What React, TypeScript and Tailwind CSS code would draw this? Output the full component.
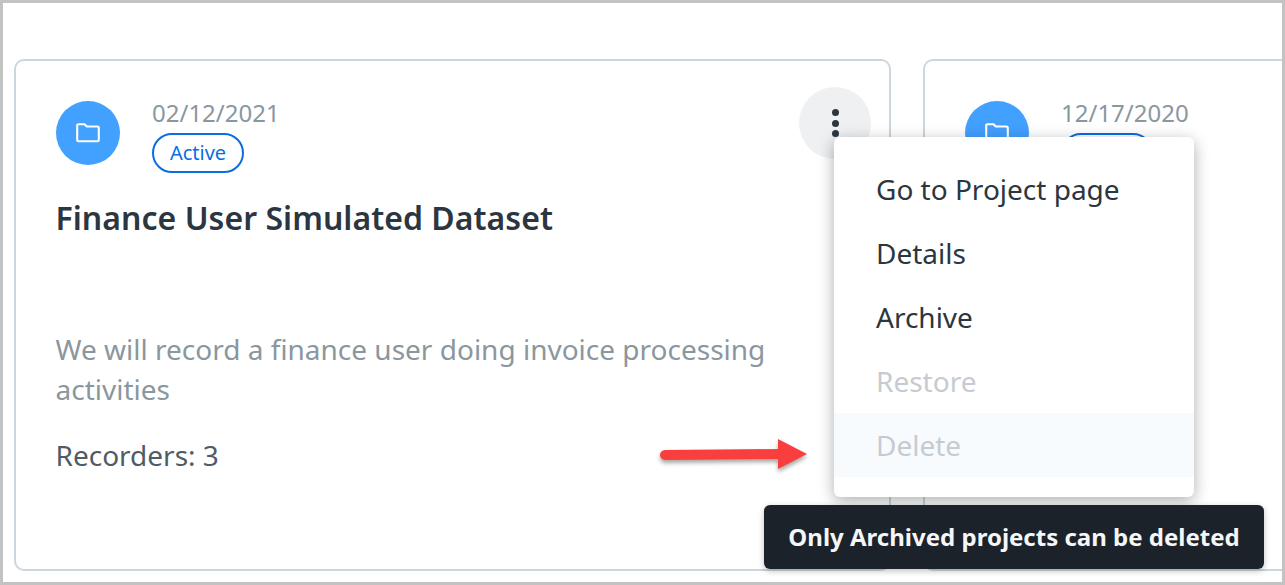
import React from "react";

const font = { fontFamily: '"Noto Sans", sans-serif' };

const FolderIcon = ({ className }: { className?: string }) => (
  <svg viewBox="0 0 24 20" className={className} fill="none" stroke="#fff" strokeWidth="2.1" strokeLinejoin="round">
    <path d="M1.2 2.500a1.300 1.300 0 0 1 1.300-1.300h6l2.300 2.300h10.700a1.300 1.300 0 0 1 1.300 1.300v12.200a1.300 1.300 0 0 1-1.300 1.300H2.500a1.300 1.300 0 0 1-1.300-1.300z" />
  </svg>
);

const Badge = () => (
  <span className="flex h-[40px] w-[92px] items-center justify-center rounded-full border-2 border-[#0a6ee0] text-[20px] text-[#0a6ee0]">
    Active
  </span>
);

const CardHead = ({ date }: { date: string }) => (
  <div className="flex items-start gap-[32px]">
    <div className="flex h-[64px] w-[64px] shrink-0 items-center justify-center rounded-full bg-[#42a0ff]">
      <FolderIcon className="h-[20px] w-[24px]" />
    </div>
    <div className="-mt-[4px] flex flex-col">
      <span className="text-[24px] leading-[32px] text-[#8a979f]">{date}</span>
      <div className="mt-[4px]"><Badge /></div>
    </div>
  </div>
);

const MenuItem = ({ label, disabled, hover }: { label: string; disabled?: boolean; hover?: boolean }) => (
  <div className={`flex h-[64px] items-center px-[42px] text-[28px] ${disabled ? "text-[#c5cbd0]" : "text-[#2b3640]"} ${hover ? "bg-[#f7fbfe]" : ""}`}>
    {label}
  </div>
);

export default function App() {
  return (
    <div style={font} className="relative h-[585px] w-[1285px] overflow-hidden border-[3px] border-[#c3c3c3] bg-white">
      <div className="flex h-full items-stretch gap-[32px] pb-[11px] pl-[11px] pt-[56px]">
        <div className="relative h-[512px] w-[877px] shrink-0 rounded-[10px] border-2 border-[#ccd6dd] pl-[40px] pt-[40px]">
          <CardHead date="02/12/2021" />
          <h2 className="-ml-[0.5px] mt-[21px] text-[32px] font-semibold leading-[48px] tracking-[0.03px] text-[#2b3640]">Finance User Simulated Dataset</h2>
          <p className="-ml-[0.5px] mt-[87px] w-[760px] text-[28px] leading-[40px] text-[#8a979f]">
            We will record a finance user doing invoice processing activities
          </p>
          <p className="-ml-[0.5px] mt-[26px] text-[28px] leading-[40px] text-[#505c65]">Recorders: 3</p>
          <button className="absolute left-[783px] top-[26px] flex h-[72px] w-[72px] flex-col items-center justify-center gap-[3.5px] rounded-full bg-[#eff0f2]">
            <span className="h-[7px] w-[7px] rounded-full bg-[#2b3640]" />
            <span className="h-[7px] w-[7px] rounded-full bg-[#2b3640]" />
            <span className="h-[7px] w-[7px] rounded-full bg-[#2b3640]" />
          </button>
        </div>
        <div className="h-[512px] flex-1 rounded-l-[10px] border-y-2 border-l-2 border-[#ccd6dd] pl-[40px] pt-[40px]">
          <CardHead date="12/17/2020" />
        </div>
      </div>

      {/* dropdown menu */}
      <div className="absolute left-[831px] top-[134px] w-[360px] rounded-[6px] bg-white py-[20px] shadow-[0_4px_16px_rgba(0,0,0,0.32)]">
        <MenuItem label="Go to Project page" />
        <MenuItem label="Details" />
        <MenuItem label="Archive" />
        <MenuItem label="Restore" disabled />
        <MenuItem label="Delete" disabled hover />
      </div>

      {/* tooltip */}
      <div className="absolute left-[761px] top-[502px] flex h-[64px] w-[500px] items-center justify-center rounded-[6px] bg-[#1b222a] text-[24px] font-bold text-[#f4f6f8] shadow-[0_2px_6px_rgba(0,0,0,0.25)]">
        Only Archived projects can be deleted
      </div>

      {/* annotation arrow */}
      <svg className="absolute left-[654px] top-[432px] drop-shadow-[0_3px_2px_rgba(0,0,0,0.35)]" width="156" height="40" viewBox="0 0 156 40">
        <path d="M8 20 L124 19" stroke="#f93e3e" strokeWidth="10" strokeLinecap="round" />
        <path d="M121 4 L150 19 L121 34 Z" fill="#f93e3e" />
      </svg>
    </div>
  );
}
